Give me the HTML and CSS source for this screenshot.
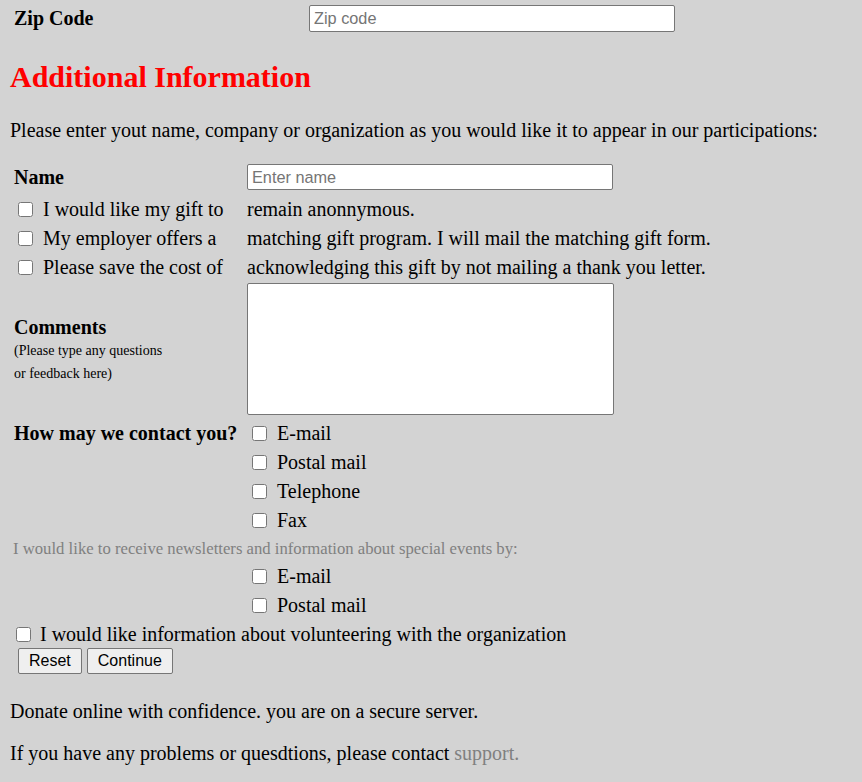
FILE: index.html
```html
<!DOCTYPE html>
<html>
<head>
<meta charset="utf-8">
<link rel="stylesheet" href="styles.css">
</head>
<body>
<div class="page">
  <div class="zip-row">
    <span class="label">Zip Code</span>
    <input class="text-input" type="text" placeholder="Zip code">
  </div>

  <h2 class="title">Additional Information</h2>

  <p class="intro">Please enter yout name, company or organization as you would like it to appear in our participations:</p>

  <div class="form-grid">
    <div class="cell label name-label">Name</div>
    <div class="cell name-cell"><input class="text-input name-input" type="text" placeholder="Enter name"></div>

    <div class="cell check-cell"><input type="checkbox" class="cb"><span>I would like my gift to</span></div>
    <div class="cell text-cell">remain anonnymous.</div>

    <div class="cell check-cell"><input type="checkbox" class="cb"><span>My employer offers a</span></div>
    <div class="cell text-cell">matching gift program. I will mail the matching gift form.</div>

    <div class="cell check-cell"><input type="checkbox" class="cb"><span>Please save the cost of</span></div>
    <div class="cell text-cell">acknowledging this gift by not mailing a thank you letter.</div>

    <div class="cell comments-label">
      <div class="label">Comments</div>
      <div class="small">(Please type any questions</div>
      <div class="small">or feedback here)</div>
    </div>
    <div class="cell comments-cell"><textarea class="comments"></textarea></div>
  </div>

  <div class="contact-grid">
    <div class="label contact-label">How may we contact you?</div>
    <div class="options">
      <label class="opt"><input type="checkbox" class="cb">E-mail</label>
      <label class="opt"><input type="checkbox" class="cb">Postal mail</label>
      <label class="opt"><input type="checkbox" class="cb">Telephone</label>
      <label class="opt"><input type="checkbox" class="cb">Fax</label>
    </div>
  </div>

  <div class="news">I would like to receive newsletters and information about special events by:</div>

  <div class="contact-grid">
    <div></div>
    <div class="options">
      <label class="opt"><input type="checkbox" class="cb">E-mail</label>
      <label class="opt"><input type="checkbox" class="cb">Postal mail</label>
    </div>
  </div>

  <label class="volunteer"><input type="checkbox" class="cb">I would like information about volunteering with the organization</label>

  <div class="buttons">
    <button type="reset" class="btn">Reset</button>
    <button type="button" class="btn">Continue</button>
  </div>

  <p class="foot donate">Donate online with confidence. you are on a secure server.</p>
  <p class="foot help">If you have any problems or quesdtions, please contact <a class="support" href="#">support.</a></p>
</div>
</body>
</html>
```

FILE: styles.css
```css
html, body {
  margin: 0;
  padding: 0;
  background: #d3d3d3;
}
body {
  font-family: "Liberation Serif", "Times New Roman", serif;
  font-size: 20px;
  color: #000;
}
.page {
  padding: 0 10px;
}
.label {
  font-weight: bold;
}
.text-input {
  font-family: "Liberation Sans", Arial, sans-serif;
  font-size: 16.3px;
  width: 366px;
  height: 27px;
  box-sizing: border-box;
  border: 1px solid #767676;
  border-radius: 2px;
  padding: 1px 4px;
  margin: 0;
  background: #fff;
}
.text-input::placeholder {
  color: #757575;
}
.zip-row {
  display: grid;
  grid-template-columns: 295px 366px;
  align-items: center;
  padding: 3px 0 0 4px;
  height: 30px;
}
.title {
  color: #ff0000;
  font-size: 30px;
  font-weight: bold;
  margin: 0;
  padding-top: 27px;
  line-height: 34px;
}
.intro {
  margin: 0;
  padding-top: 24px;
  line-height: 24px;
}
.form-grid {
  display: grid;
  grid-template-columns: 233px auto;
  padding-left: 4px;
  margin-top: 17px;
}
.cell {
  display: flex;
  align-items: center;
}
.name-label, .name-cell {
  height: 36px;
}
.name-input {
  height: 26px;
}
.check-cell, .text-cell {
  height: 29px;
}
.cb {
  width: 15px;
  height: 15px;
  margin: 0 10px 0 4px;
  flex: none;
}
.comments-label {
  flex-direction: column;
  align-items: flex-start;
  justify-content: center;
  padding-top: 2px;
}
.comments-label .label {
  line-height: 24px;
}
.small {
  font-size: 14px;
  line-height: 23px;
}
.comments-cell {
  padding-top: 1px;
}
.comments {
  width: 367px;
  height: 132px;
  box-sizing: border-box;
  margin: 0;
  border: 1px solid #767676;
  border-radius: 2px;
  background: #fff;
  resize: none;
  display: block;
}
.contact-grid {
  display: grid;
  grid-template-columns: 234px auto;
  padding-left: 4px;
  margin-top: 4px;
}
.contact-label {
  height: 29px;
  display: flex;
  align-items: center;
}
.options {
  display: flex;
  flex-direction: column;
}
.opt {
  height: 29px;
  display: flex;
  align-items: center;
}
.opt .cb {
  margin: 0 10px 0 4px;
}
.news {
  font-size: 16.7px;
  color: #808080;
  line-height: 26px;
  padding-left: 3px;
  padding-top: 1px;
}
.news + .contact-grid {
  margin-top: 0;
}
.volunteer {
  display: flex;
  align-items: center;
  height: 28px;
}
.volunteer .cb {
  margin: 0 9px 0 6px;
}
.buttons {
  display: flex;
  gap: 5px;
  padding-left: 8px;
  height: 26px;
}
.btn {
  font-family: "Liberation Sans", Arial, sans-serif;
  font-size: 16px;
  height: 26px;
  padding: 0 10px;
  background: #efefef;
  border: 1px solid #767676;
  border-radius: 2px;
  color: #000;
}
.foot {
  margin: 0;
  line-height: 24px;
}
.donate {
  padding-top: 25px;
}
.help {
  padding-top: 18px;
}
.support {
  color: #808080;
  text-decoration: none;
}
```
